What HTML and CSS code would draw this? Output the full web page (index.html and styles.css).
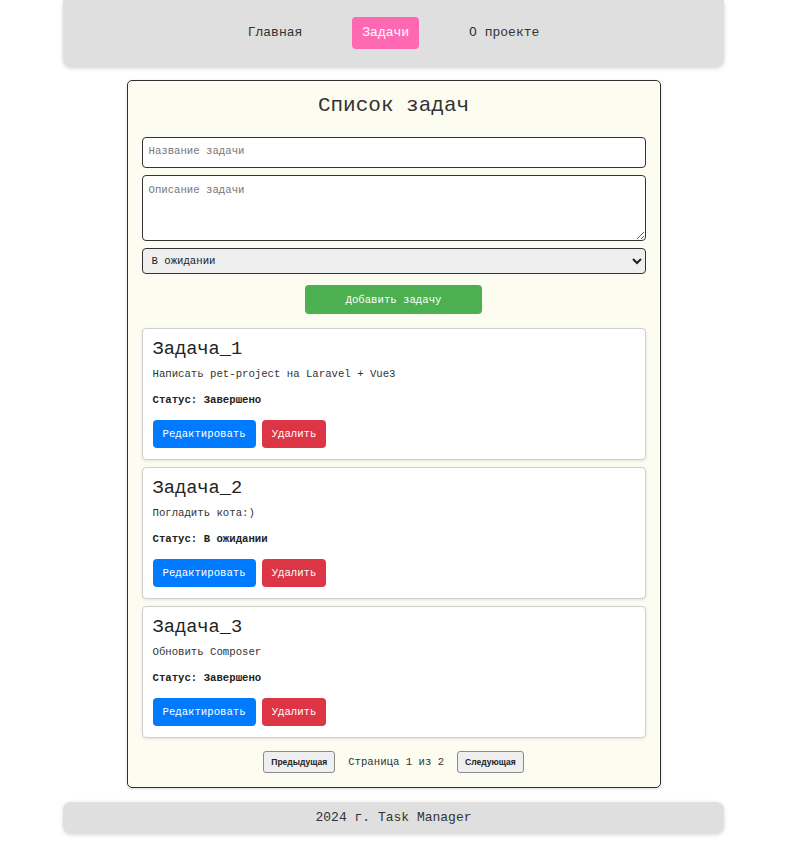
FILE: index.html
```html
<!DOCTYPE html>
<html lang="ru">
<head>
<meta charset="utf-8">
<title>Task Manager</title>
<link rel="stylesheet" href="styles.css">
</head>
<body>
<nav class="nav">
  <a class="nav-link" href="#">Главная</a>
  <a class="nav-link active" href="#">Задачи</a>
  <a class="nav-link" href="#">О проекте</a>
</nav>

<main class="container">
  <h2 class="title">Список задач</h2>
  <form class="form">
    <input class="field field-input" type="text" placeholder="Название задачи">
    <textarea class="field field-area" placeholder="Описание задачи"></textarea>
    <select class="field field-select">
      <option>В ожидании</option>
      <option>Завершено</option>
    </select>
    <button type="button" class="btn-add">Добавить задачу</button>
  </form>

  <div class="tasks">
    <div class="card">
      <h3 class="card-title">Задача_1</h3>
      <p class="card-desc">Написать pet-project на Laravel + Vue3</p>
      <p class="card-status">Статус: Завершено</p>
      <div class="card-actions">
        <button type="button" class="btn btn-edit">Редактировать</button>
        <button type="button" class="btn btn-delete">Удалить</button>
      </div>
    </div>
    <div class="card">
      <h3 class="card-title">Задача_2</h3>
      <p class="card-desc">Погладить кота:)</p>
      <p class="card-status">Статус: В ожидании</p>
      <div class="card-actions">
        <button type="button" class="btn btn-edit">Редактировать</button>
        <button type="button" class="btn btn-delete">Удалить</button>
      </div>
    </div>
    <div class="card">
      <h3 class="card-title">Задача_3</h3>
      <p class="card-desc">Обновить Composer</p>
      <p class="card-status">Статус: Завершено</p>
      <div class="card-actions">
        <button type="button" class="btn btn-edit">Редактировать</button>
        <button type="button" class="btn btn-delete">Удалить</button>
      </div>
    </div>
  </div>

  <div class="pagination">
    <button type="button" class="page-btn">Предыдущая</button>
    <span class="page-info">Страница 1 из 2</span>
    <button type="button" class="page-btn">Следующая</button>
  </div>
</main>

<footer class="footer">2024 г. Task Manager</footer>
</body>
</html>
```

FILE: styles.css
```css
* {
  box-sizing: border-box;
}

body {
  margin: 0;
  background: #ffffff;
  font-family: "Liberation Mono", "Courier New", monospace;
  color: #333;
}

.nav {
  width: 661px;
  margin: 0 auto;
  padding: 17px 0;
  background: #dfdfdf;
  border-radius: 0 0 8px 8px;
  box-shadow: 0 2px 4px rgba(0, 0, 0, 0.18);
  display: flex;
  justify-content: center;
  gap: 40px;
}

.nav-link {
  display: block;
  padding: 8px 10px;
  font-size: 13px;
  line-height: 16px;
  color: #333;
  text-decoration: none;
  border-radius: 4px;
}

.nav-link.active {
  background: #ff69b4;
  color: #fff;
}

.container {
  width: 534px;
  margin: 14px auto;
  padding: 12px 14px 14px;
  background: #fcfcf0;
  border: 1px solid #2f2f2f;
  border-radius: 5px;
  box-shadow: 0 1px 3px rgba(0, 0, 0, 0.15);
}

.title {
  margin: 0 0 19px;
  font-size: 21px;
  line-height: 25px;
  font-weight: normal;
  text-align: center;
  color: #333;
}

.form {
  display: flex;
  flex-direction: column;
  gap: 7px;
}

.field {
  width: 100%;
  font-family: "Liberation Mono", "Courier New", monospace;
  font-size: 10.67px;
  color: #222;
  border: 1px solid #333;
  border-radius: 4px;
  background: #fff;
}

.field::placeholder {
  color: #777;
}

.field-input {
  height: 31px;
  padding: 0 6px 3px;
}

.field-area {
  height: 66px;
  padding: 8px 6px;
  resize: vertical;
}

.field-select {
  height: 26px;
  padding: 0 5px;
  background: #efefef;
}

.btn-add {
  align-self: center;
  width: 35%;
  height: 29px;
  margin-top: 4px;
  border: none;
  border-radius: 4px;
  background: #4caf50;
  color: #fff;
  font-family: "Liberation Mono", "Courier New", monospace;
  font-size: 10.67px;
}

.tasks {
  margin-top: 14px;
  display: flex;
  flex-direction: column;
  gap: 7px;
}

.card {
  background: #fff;
  border: 1px solid #cfcfcf;
  border-radius: 4px;
  box-shadow: 0 1px 3px rgba(0, 0, 0, 0.1);
  padding: 10px 10px 11px;
}

.card-title {
  margin: 0 0 8px;
  font-size: 18.7px;
  line-height: 21px;
  font-weight: normal;
  color: #222;
}

.card-desc {
  margin: 0 0 13px;
  font-size: 10.67px;
  line-height: 13px;
  color: #333;
}

.card-status {
  margin: 0 0 13px;
  font-size: 10.67px;
  line-height: 13px;
  font-weight: bold;
  color: #222;
}

.card-actions {
  display: flex;
  gap: 6px;
}

.btn {
  height: 28px;
  padding: 0 10px;
  border: none;
  border-radius: 4px;
  color: #fff;
  font-family: "Liberation Mono", "Courier New", monospace;
  font-size: 10.67px;
}

.btn-edit {
  background: #007bff;
}

.btn-delete {
  background: #dc3545;
}

.pagination {
  margin-top: 13px;
  display: flex;
  justify-content: center;
  align-items: center;
  gap: 13px;
}

.page-btn {
  height: 22px;
  padding: 0 7px;
  background: #efefef;
  border: 1px solid #8a8a8a;
  border-radius: 3px;
  font-family: "Liberation Sans", Arial, sans-serif;
  font-size: 8.5px;
  font-weight: bold;
  color: #222;
}

.page-info {
  font-size: 10.67px;
  color: #333;
}

.footer {
  width: 661px;
  margin: 0 auto 26px;
  padding: 8px 0;
  background: #dfdfdf;
  border-radius: 8px;
  box-shadow: 0 1px 4px rgba(0, 0, 0, 0.15);
  text-align: center;
  font-size: 13px;
  line-height: 16px;
  color: #333;
}
```
